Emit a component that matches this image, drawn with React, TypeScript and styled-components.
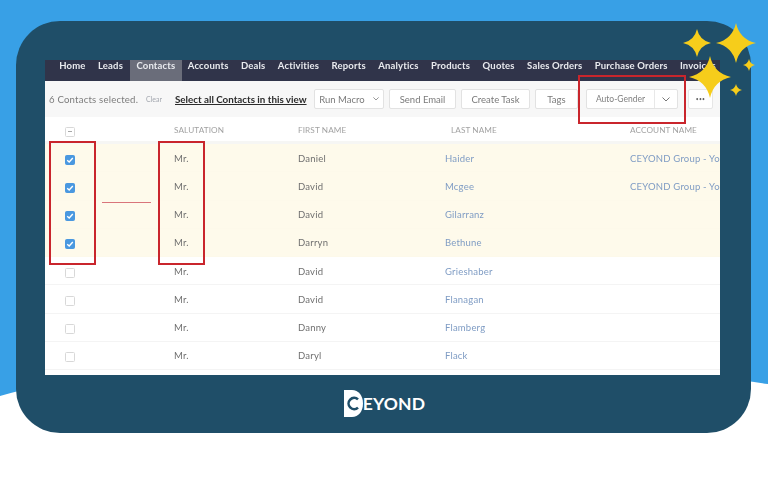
import React from 'react';
import styled, { createGlobalStyle } from 'styled-components';

const GlobalStyle = createGlobalStyle`
  html, body {
    margin: 0;
    padding: 0;
    background: #fff;
  }
  * {
    box-sizing: border-box;
  }
`;

const navItems = [
  'Home',
  'Leads',
  'Contacts',
  'Accounts',
  'Deals',
  'Activities',
  'Reports',
  'Analytics',
  'Products',
  'Quotes',
  'Sales Orders',
  'Purchase Orders',
  'Invoices',
];

const contacts = [
  { first: 'Daniel', last: 'Haider', account: 'CEYOND Group - You', selected: true },
  { first: 'David', last: 'Mcgee', account: 'CEYOND Group - You', selected: true },
  { first: 'David', last: 'Gilarranz', account: '', selected: true },
  { first: 'Darryn', last: 'Bethune', account: '', selected: true },
  { first: 'David', last: 'Grieshaber', account: '', selected: false },
  { first: 'David', last: 'Flanagan', account: '', selected: false },
  { first: 'Danny', last: 'Flamberg', account: '', selected: false },
  { first: 'Daryl', last: 'Flack', account: '', selected: false },
];

const stars = [
  { x: 736, y: 43, r: 20 },
  { x: 697, y: 43, r: 14 },
  { x: 710, y: 77, r: 21 },
  { x: 749, y: 65, r: 6 },
  { x: 736, y: 90, r: 6 },
];

function Star({ x, y, r }: { x: number; y: number; r: number }) {
  const k = r * 0.18;
  return (
    <path
      d={`M${x} ${y - r}Q${x + k} ${y - k} ${x + r} ${y}Q${x + k} ${y + k} ${x} ${y + r}Q${x - k} ${y + k} ${x - r} ${y}Q${x - k} ${y - k} ${x} ${y - r}Z`}
    />
  );
}

function Chevron({ width = 8 }: { width?: number }) {
  return (
    <svg width={width} height={(width * 5) / 8} viewBox="0 0 8 5" fill="none" stroke="#777" strokeWidth="1">
      <path d="M0.5 0.5L4 4L7.5 0.5" />
    </svg>
  );
}

function LogoMark() {
  return (
    <svg width="19" height="27" viewBox="0 0 19 27">
      <path d="M0 0H8C14.5 0 19 5.5 19 13.5S14.5 27 8 27H0Z" fill="#fff" />
      <path
        d="M14 9.4A5.6 5.6 0 1 0 14 17.6"
        fill="none"
        stroke="#1f4e68"
        strokeWidth="2.6"
      />
    </svg>
  );
}

export default function App() {
  return (
    <Page>
      <GlobalStyle />
      <Hill viewBox="0 0 768 480" aria-hidden>
        <path d="M0 396C150 350 600 360 768 384V480H0Z" fill="#fff" />
      </Hill>
      <Card>
        <Screen>
          <Nav>
            {navItems.map((item) => (
              <NavItem key={item} $active={item === 'Contacts'}>
                {item}
              </NavItem>
            ))}
          </Nav>
          <Toolbar>
            <Selected>6 Contacts selected.</Selected>
            <Clear>Clear</Clear>
            <SelectAll>Select all Contacts in this view</SelectAll>
            <ToolButton $width={70} $gap={8}>
              Run Macro <Chevron width={6} />
            </ToolButton>
            <ToolButton $width={67}>Send Email</ToolButton>
            <ToolButton $width={69}>Create Task</ToolButton>
            <ToolButton $width={43}>Tags</ToolButton>
            <SplitButton>
              <SplitLabel>Auto-Gender</SplitLabel>
              <SplitArrow>
                <Chevron />
              </SplitArrow>
            </SplitButton>
            <MoreButton>•••</MoreButton>
          </Toolbar>
          <Table>
            <HeadRow>
              <CheckCell>
                <Checkbox $state="mixed" />
              </CheckCell>
              <span>Salutation</span>
              <span>First Name</span>
              <LastHead>Last Name</LastHead>
              <span>Account Name</span>
            </HeadRow>
            {contacts.map((c) => (
              <Row key={c.last} $selected={c.selected}>
                <CheckCell>
                  <Checkbox $state={c.selected ? 'on' : 'off'}>
                    {c.selected && (
                      <svg width="8" height="8" viewBox="0 0 8 8" fill="none" stroke="#fff" strokeWidth="1.4">
                        <path d="M1.2 4.2L3.2 6L6.8 2" />
                      </svg>
                    )}
                  </Checkbox>
                </CheckCell>
                <span>Mr.</span>
                <span>{c.first}</span>
                <LinkText>{c.last}</LinkText>
                <LinkText>{c.account}</LinkText>
              </Row>
            ))}
          </Table>
        </Screen>
        <Footer>
          <LogoMark />
          <LogoText>EYOND</LogoText>
        </Footer>
      </Card>
      <RedBox $x={49} $y={141} $w={47} $h={124} />
      <RedBox $x={158} $y={141} $w={47} $h={124} />
      <RedBox $x={578} $y={75} $w={108} $h={49} />
      <RedLine />
      <Sparkles viewBox="0 0 768 480" aria-hidden fill="#f6cd1b">
        {stars.map((s) => (
          <Star key={s.x + '-' + s.y} {...s} />
        ))}
      </Sparkles>
    </Page>
  );
}

const Page = styled.div`
  position: relative;
  width: 768px;
  height: 480px;
  padding: 21px 17px 47px 16px;
  overflow: hidden;
  background: #38a0e6;
  font-family: 'Lato', 'Liberation Sans', sans-serif;
`;

const Hill = styled.svg`
  position: absolute;
  inset: 0;
  width: 768px;
  height: 480px;
`;

const Sparkles = styled.svg`
  position: absolute;
  inset: 0;
  width: 768px;
  height: 480px;
  pointer-events: none;
`;

const Card = styled.div`
  position: relative;
  height: 412px;
  padding: 39px 31px 0 29px;
  border-radius: 44px;
  background: #1f4e68;
`;

const Screen = styled.div`
  display: flex;
  flex-direction: column;
  height: 315px;
  overflow: hidden;
  background: #fff;
  filter: blur(0.35px);
`;

const Nav = styled.div`
  display: flex;
  flex: none;
  height: 21px;
  padding-left: 8px;
  background: #30344a;
`;

const NavItem = styled.div<{ $active?: boolean }>`
  display: flex;
  align-items: center;
  margin-left: ${(p) => (p.$active ? '1px' : '0')};
  padding: 0 6.2px 10px;
  color: #e9ebef;
  font-size: 9.5px;
  font-weight: 700;
  letter-spacing: 0.18px;
  white-space: nowrap;
  background: ${(p) => (p.$active ? '#6a6d7a' : 'transparent')};
`;

const Toolbar = styled.div`
  display: flex;
  flex: none;
  align-items: center;
  height: 36px;
  padding: 0 0 0 4px;
  background: #f7f7f7;
  white-space: nowrap;
`;

const Selected = styled.span`
  width: 90px;
  color: #7c7c7c;
  font-size: 9.6px;
  letter-spacing: 0.2px;
`;

const Clear = styled.span`
  width: 17px;
  margin-left: 7px;
  color: #a4a8b0;
  font-size: 7px;
`;

const SelectAll = styled.span`
  width: 132px;
  margin: 0 7px 0 12px;
  color: #2b2b2b;
  font-size: 9.8px;
  font-weight: 700;
  text-decoration: underline;
`;

const ToolButton = styled.div<{ $width: number; $gap?: number }>`
  display: flex;
  flex: none;
  align-items: center;
  justify-content: center;
  gap: ${(p) => p.$gap ?? 4}px;
  width: ${(p) => p.$width}px;
  height: 20px;
  margin-right: 5px;
  border: 1px solid #e2e2e2;
  border-radius: 2px;
  background: #fff;
  color: #7a7a7a;
  font-size: 9.5px;
`;

const SplitButton = styled.div`
  display: flex;
  flex: none;
  width: 92px;
  height: 20px;
  margin-left: 3px;
  border: 1px solid #e2e2e2;
  border-radius: 2px;
  background: #fff;
  color: #808080;
  font-size: 8.5px;
`;

const SplitLabel = styled.div`
  display: flex;
  flex: 1;
  align-items: center;
  justify-content: center;
`;

const SplitArrow = styled.div`
  display: flex;
  flex: none;
  align-items: center;
  justify-content: center;
  width: 23px;
  border-left: 1px solid #e8e8e8;
`;

const MoreButton = styled.div`
  display: flex;
  flex: none;
  align-items: center;
  justify-content: center;
  width: 25px;
  height: 20px;
  margin-left: 10px;
  border: 1px solid #e6e6e6;
  border-radius: 2px;
  background: #fff;
  color: #666;
  font-size: 5px;
  letter-spacing: 0.3px;
`;

const Table = styled.div`
  flex: 1;
  background: #fff;
`;

const columns = `
  display: grid;
  grid-template-columns: 129px 124px 147px 185px 90px;
  align-items: center;
  overflow: hidden;
  white-space: nowrap;
`;

const HeadRow = styled.div`
  ${columns}
  height: 27px;
  padding-top: 2px;
  border-bottom: 3px solid #f6f6f4;
  color: #a2a2a2;
  font-size: 8.2px;
  letter-spacing: 0.1px;
  text-transform: uppercase;
`;

const LastHead = styled.span`
  padding-left: 6px;
`;

const Row = styled.div<{ $selected: boolean }>`
  ${columns}
  height: 28.25px;
  padding-top: 1px;
  border-bottom: 1px solid ${(p) => (p.$selected ? '#fdf9ea' : '#f4f4f4')};
  background: ${(p) => (p.$selected ? '#fefaeb' : '#fff')};
  color: #6f6f6f;
  font-size: 9.5px;
  letter-spacing: 0.2px;
`;

const LinkText = styled.span`
  color: #7f9cc4;
`;

const CheckCell = styled.div`
  display: flex;
  align-items: center;
  padding: 3px 0 0 20px;
`;

const Checkbox = styled.div<{ $state: 'on' | 'off' | 'mixed' }>`
  position: relative;
  display: flex;
  align-items: center;
  justify-content: center;
  width: 10px;
  height: 10px;
  border: 1px solid ${(p) => (p.$state === 'on' ? '#4a98e0' : '#d8d8d8')};
  border-radius: 1.5px;
  background: ${(p) => (p.$state === 'on' ? '#4a98e0' : '#fff')};

  ${(p) =>
    p.$state === 'mixed' &&
    `
    &::after {
      content: '';
      width: 4px;
      height: 1px;
      background: #a8a8a8;
    }
  `}
`;

const Footer = styled.div`
  display: flex;
  align-items: center;
  justify-content: center;
  height: 58px;
  padding: 0 0 2px 4px;
`;

const LogoText = styled.span`
  margin-left: 0;
  color: #fff;
  font-family: 'Lato', 'Liberation Sans', sans-serif;
  font-size: 17.5px;
  font-weight: 700;
  letter-spacing: 0.2px;
`;

const RedBox = styled.div<{ $x: number; $y: number; $w: number; $h: number }>`
  position: absolute;
  left: ${(p) => p.$x}px;
  top: ${(p) => p.$y}px;
  width: ${(p) => p.$w}px;
  height: ${(p) => p.$h}px;
  border: 2px solid #c9252c;
`;

const RedLine = styled.div`
  position: absolute;
  left: 102px;
  top: 202px;
  width: 49px;
  height: 1px;
  background: #d9747a;
`;
